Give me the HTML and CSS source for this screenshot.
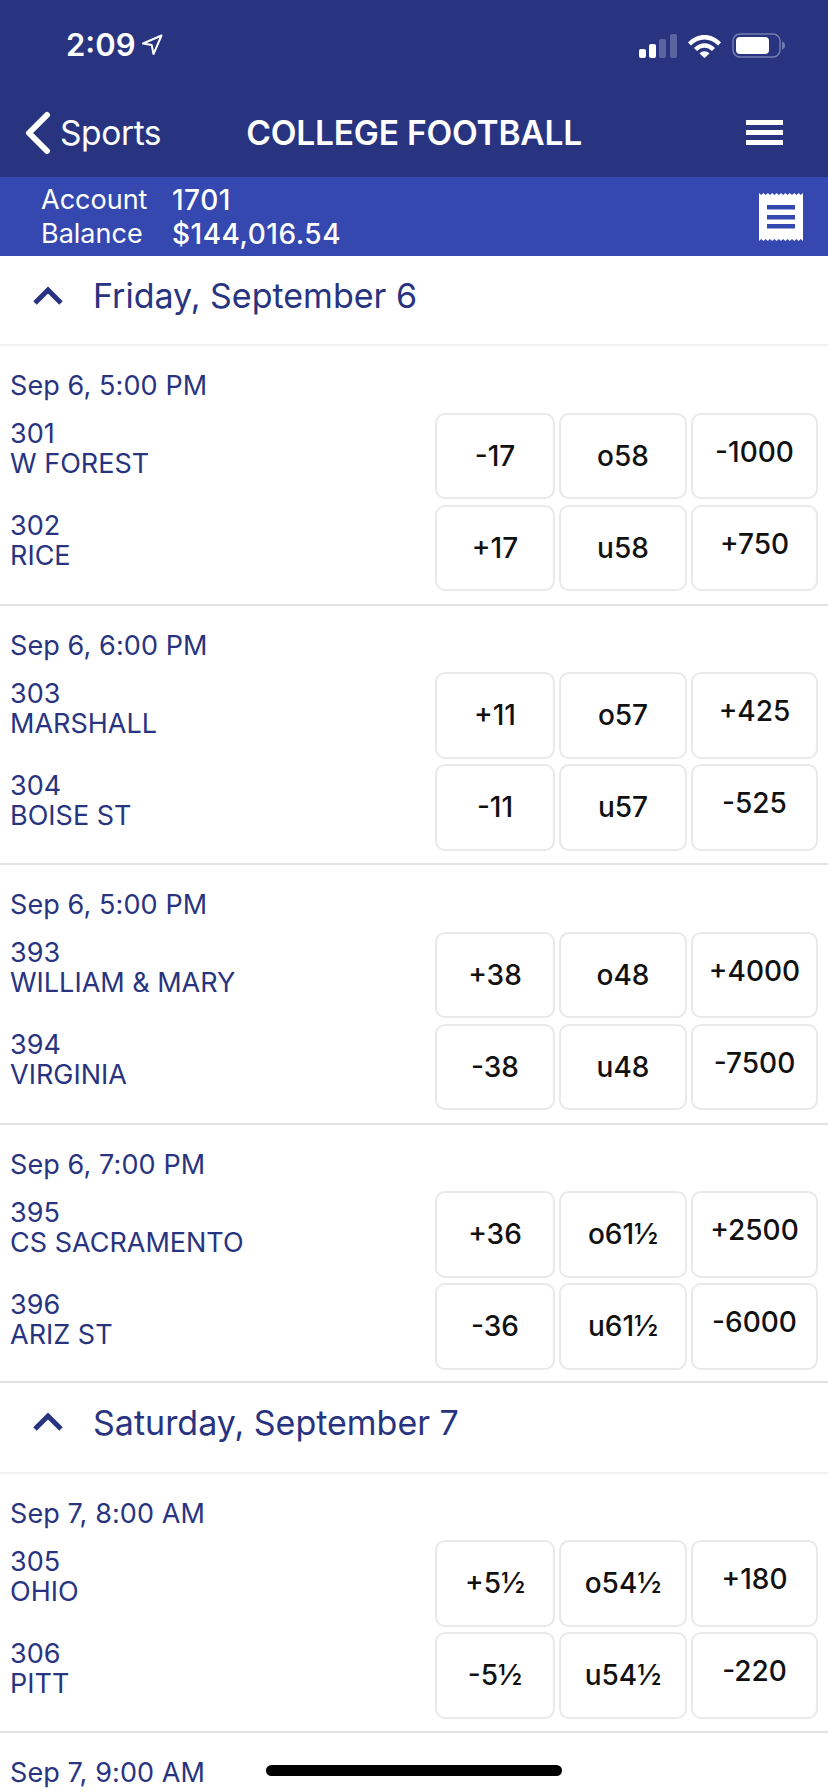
FILE: index.html
```html
<!DOCTYPE html>
<html lang="en">
<head>
<meta charset="UTF-8">
<meta name="viewport" content="width=device-width, initial-scale=1.0">
<title>College Football</title>
<link rel="stylesheet" href="styles.css">
</head>
<body>

<div class="phone">
    <header class="top">
        <div class="status">
            <div class="clock">
                <span>2:09</span>
                <svg class="arrow" width="22" height="22" viewBox="0 0 22 22"><path d="M20.5 1.5 2 9.5l8.7 1.6 1.8 9z" fill="none" stroke="#fff" stroke-width="2" stroke-linejoin="round"/></svg>
            </div>
            <div class="status-icons">
                <svg width="38" height="24" viewBox="0 0 38 24">
                    <rect x="0" y="15" width="7" height="9" rx="2" fill="#fff"/>
                    <rect x="10" y="10" width="7" height="14" rx="2" fill="#fff"/>
                    <rect x="20" y="5" width="7" height="19" rx="2" fill="#5a659f"/>
                    <rect x="31" y="0" width="7" height="24" rx="2" fill="#5a659f"/>
                </svg>
                <svg width="33" height="24" viewBox="0 0 33 24">
                    <path d="M0 8.500C9 -1.500 24 -1.500 33 8.500l-3 3C22.500 3.500 10.500 3.500 3 11.500z" fill="#fff"/>
                    <path d="M6 14c6-6.500 15-6.500 21 0l-3 3c-4.500-4.500-10.500-4.500-15 0z" fill="#fff"/>
                    <path d="M11.500 19.500c3-3 7-3 10 0L16.500 24z" fill="#fff"/>
                </svg>
                <svg width="53" height="25" viewBox="0 0 53 25">
                    <rect x="1" y="1" width="47" height="23" rx="7" fill="none" stroke="#727cb0" stroke-width="1.500"/>
                    <rect x="4" y="4" width="33" height="17" rx="4" fill="#fff"/>
                    <path d="M50 8.500c2 .5 3 2 3 4s-1 3.500-3 4z" fill="#727cb0"/>
                </svg>
            </div>
        </div>
        <nav class="nav">
            <div class="back">
                <svg width="28" height="44" viewBox="0 0 28 44"><path d="M24 4 6 22l18 18" fill="none" stroke="#fff" stroke-width="6" stroke-linecap="round" stroke-linejoin="round"/></svg>
                <span>Sports</span>
            </div>
            <div class="title">COLLEGE FOOTBALL</div>
            <div class="burger"><i></i><i></i><i></i></div>
        </nav>
    </header>

    <div class="account">
        <div class="account-info">
            <span>Account</span><b>1701</b>
            <span>Balance</span><b>$144,016.54</b>
        </div>
        <svg class="receipt" width="44" height="48" viewBox="0 0 44 48">
            <path d="M0 0l2.200 2 2.200-2 2.200 2 2.200-2 2.200 2 2.200-2 2.200 2 2.200-2 2.200 2 2.200-2 2.200 2 2.200-2 2.200 2 2.200-2 2.200 2 2.200-2 2.200 2 2.200-2 2.200 2 2.200-2V48l-2.200-2-2.200 2-2.200-2-2.200 2-2.200-2-2.200 2-2.200-2-2.200 2-2.200-2-2.200 2-2.200-2-2.200 2-2.200-2-2.200 2-2.200-2-2.200 2-2.200-2-2.200 2-2.200-2-2.200 2z" fill="#fff"/>
            <rect x="8" y="12" width="28" height="4.500" fill="#3548b0"/>
            <rect x="8" y="22" width="28" height="4.500" fill="#3548b0"/>
            <rect x="8" y="31" width="28" height="4.500" fill="#3548b0"/>
        </svg>
    </div>

    <section class="day">
        <svg width="32" height="20" viewBox="0 0 32 20"><path d="M3 17 16 4l13 13" fill="none" stroke="#28347f" stroke-width="5"/></svg>
        <span>Friday, September 6</span>
    </section>

    <article class="game">
        <div class="time">Sep 6, 5:00 PM</div>
        <div class="row">
            <div class="team">301<br>W FOREST</div>
            <div class="odd">-17</div><div class="odd">o58</div><div class="odd money">-1000</div>
        </div>
        <div class="row">
            <div class="team">302<br>RICE</div>
            <div class="odd">+17</div><div class="odd">u58</div><div class="odd money">+750</div>
        </div>
    </article>

    <article class="game">
        <div class="time">Sep 6, 6:00 PM</div>
        <div class="row">
            <div class="team">303<br>MARSHALL</div>
            <div class="odd">+11</div><div class="odd">o57</div><div class="odd money">+425</div>
        </div>
        <div class="row">
            <div class="team">304<br>BOISE ST</div>
            <div class="odd">-11</div><div class="odd">u57</div><div class="odd money">-525</div>
        </div>
    </article>

    <article class="game">
        <div class="time">Sep 6, 5:00 PM</div>
        <div class="row">
            <div class="team">393<br>WILLIAM &amp; MARY</div>
            <div class="odd">+38</div><div class="odd">o48</div><div class="odd money">+4000</div>
        </div>
        <div class="row">
            <div class="team">394<br>VIRGINIA</div>
            <div class="odd">-38</div><div class="odd">u48</div><div class="odd money">-7500</div>
        </div>
    </article>

    <article class="game last">
        <div class="time">Sep 6, 7:00 PM</div>
        <div class="row">
            <div class="team">395<br>CS SACRAMENTO</div>
            <div class="odd">+36</div><div class="odd">o61½</div><div class="odd money">+2500</div>
        </div>
        <div class="row">
            <div class="team">396<br>ARIZ ST</div>
            <div class="odd">-36</div><div class="odd">u61½</div><div class="odd money">-6000</div>
        </div>
    </article>

    <section class="day later">
        <svg width="32" height="20" viewBox="0 0 32 20"><path d="M3 17 16 4l13 13" fill="none" stroke="#28347f" stroke-width="5"/></svg>
        <span>Saturday, September 7</span>
    </section>

    <article class="game">
        <div class="time">Sep 7, 8:00 AM</div>
        <div class="row">
            <div class="team">305<br>OHIO</div>
            <div class="odd">+5½</div><div class="odd">o54½</div><div class="odd money">+180</div>
        </div>
        <div class="row">
            <div class="team">306<br>PITT</div>
            <div class="odd">-5½</div><div class="odd">u54½</div><div class="odd money">-220</div>
        </div>
    </article>

    <article class="game">
        <div class="time">Sep 7, 9:00 AM</div>
    </article>

    <div class="home-bar"></div>
</div>

</body>
</html>
```

FILE: styles.css
```css
* {
    box-sizing: border-box;
}
body {
    margin: 0;
    font-family: Inter, "Liberation Sans", sans-serif;
    color: #28347f;
    background: #fff;
}
.phone {
    position: relative;
    width: 828px;
    height: 1792px;
    overflow: hidden;
}

/* Top blue header */
.top {
    height: 177px;
    background: #28347f;
    color: #fff;
}
.status {
    height: 88px;
    display: flex;
    justify-content: space-between;
    align-items: flex-end;
    padding: 0 43px 30px 66px;
}
.clock {
    display: flex;
    align-items: center;
    gap: 6px;
    margin-bottom: -2px;
    font-size: 31px;
    font-weight: 600;
    line-height: 30px;
}
.status-icons {
    display: flex;
    align-items: center;
    gap: 11px;
}
.nav {
    height: 89px;
    display: flex;
    align-items: center;
    padding: 0 45px 0 23px;
}
.back {
    display: flex;
    align-items: center;
    gap: 9px;
    font-size: 33.5px;
    letter-spacing: -0.4px;
}
.title {
    flex: 1;
    padding-left: 85px;
    font-size: 33.5px;
    font-weight: 600;
    letter-spacing: -0.2px;
}
.burger {
    width: 37px;
    display: flex;
    flex-direction: column;
    gap: 5px;
}
.burger i {
    display: block;
    height: 5px;
    background: #fff;
}

/* Account strip */
.account {
    height: 79px;
    background: #3548b0;
    color: #fff;
    display: flex;
    justify-content: space-between;
    align-items: center;
    padding: 0 25px 0 41px;
    font-size: 27px;
}
.account-info {
    display: grid;
    grid-template-columns: 131px auto;
    line-height: 34px;
}
.account-info b {
    font-weight: 500;
    font-size: 28px;
    letter-spacing: 0.5px;
}

/* Day heading */
.day {
    height: 90px;
    display: flex;
    align-items: center;
    gap: 29px;
    padding: 0 0 9px 32px;
    font-size: 34px;
    border-bottom: 2px solid #f1f1f1;
}
.day.later {
    height: 91px;
    padding-bottom: 10px;
}

/* One game */
.game {
    height: 259.5px;
    padding: 0 10px;
    border-bottom: 2px solid #e2e2e2;
}
.game.last {
    height: 258px;
}
.time {
    height: 66.5px;
    padding-top: 24px;
    font-size: 27px;
    line-height: 32px;
    letter-spacing: 0.1px;
}
.row {
    display: grid;
    grid-template-columns: 1fr 120px 128px 127px;
    column-gap: 4px;
    height: 86.5px;
    margin-bottom: 5.5px;
}
.team {
    font-size: 27px;
    line-height: 30px;
    padding-top: 6.5px;
}
.odd {
    display: flex;
    align-items: center;
    justify-content: center;
    border: 2px solid #e9e9e9;
    border-radius: 10px;
    color: #111;
    font-size: 28px;
    font-weight: 500;
}
.money {
    padding-bottom: 8px;
}

.home-bar {
    position: absolute;
    left: 266px;
    bottom: 16px;
    width: 296px;
    height: 11px;
    border-radius: 6px;
    background: #000;
}
```
